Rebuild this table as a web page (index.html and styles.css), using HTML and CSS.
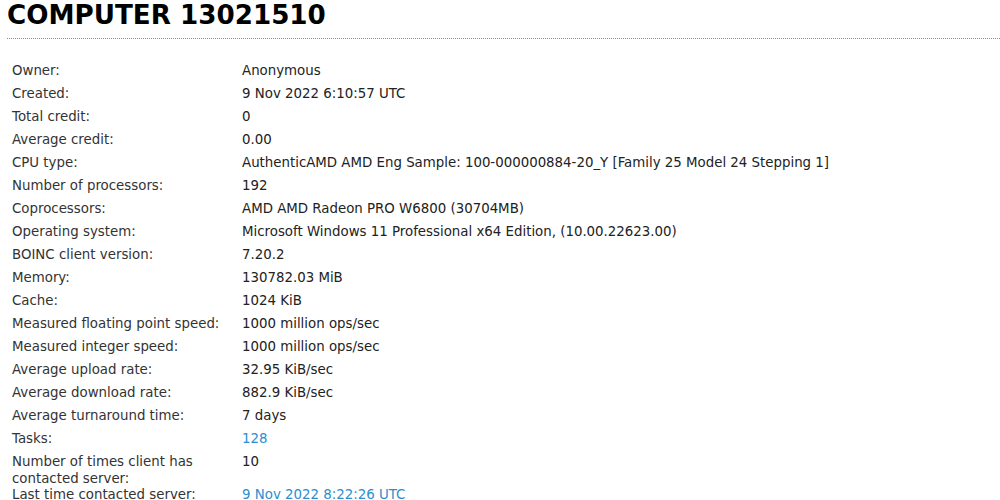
FILE: index.html
```html
<!DOCTYPE html>
<html>
<head>
<meta charset="utf-8">
<link rel="stylesheet" href="styles.css">
</head>
<body>
<h1 class="title">COMPUTER 13021510</h1>
<div class="info">
  <div class="label">Owner:</div><div class="value">Anonymous</div>
  <div class="label">Created:</div><div class="value">9 Nov 2022 6:10:57 UTC</div>
  <div class="label">Total credit:</div><div class="value">0</div>
  <div class="label">Average credit:</div><div class="value">0.00</div>
  <div class="label">CPU type:</div><div class="value">AuthenticAMD AMD Eng Sample: 100-000000884-20_Y [Family 25 Model 24 Stepping 1]</div>
  <div class="label">Number of processors:</div><div class="value">192</div>
  <div class="label">Coprocessors:</div><div class="value">AMD AMD Radeon PRO W6800 (30704MB)</div>
  <div class="label">Operating system:</div><div class="value">Microsoft Windows 11 Professional x64 Edition, (10.00.22623.00)</div>
  <div class="label">BOINC client version:</div><div class="value">7.20.2</div>
  <div class="label">Memory:</div><div class="value">130782.03 MiB</div>
  <div class="label">Cache:</div><div class="value">1024 KiB</div>
  <div class="label">Measured floating point speed:</div><div class="value">1000 million ops/sec</div>
  <div class="label">Measured integer speed:</div><div class="value">1000 million ops/sec</div>
  <div class="label">Average upload rate:</div><div class="value">32.95 KiB/sec</div>
  <div class="label">Average download rate:</div><div class="value">882.9 KiB/sec</div>
  <div class="label">Average turnaround time:</div><div class="value">7 days</div>
  <div class="label">Tasks:</div><div class="value"><a class="link" href="#">128</a></div>
  <div class="label wrap">Number of times client has contacted server:</div><div class="value wrap">10</div>
  <div class="label">Last time contacted server:</div><div class="value"><a class="link" href="#">9 Nov 2022 8:22:26 UTC</a></div>
</div>
</body>
</html>
```
FILE: styles.css
```css
html, body {
  margin: 0;
  padding: 0;
  background: #ffffff;
}
body {
  font-family: "DejaVu Sans", Verdana, sans-serif;
  font-size: 13.35px;
  color: #222222;
}
.title {
  margin: 0 0 0 7px;
  padding: 0 0 8px 0;
  font-size: 26.2px;
  line-height: 30px;
  font-weight: bold;
  color: #000000;
  border-bottom: 1px dotted #8a8a8a;
}
.info {
  display: grid;
  grid-template-columns: 230px 1fr;
  margin-top: 20px;
  padding-left: 12px;
}
.label, .value {
  padding: 3px 0;
  line-height: 17px;
}
.label {
  color: #333333;
  width: 212px;
}
.value {
  color: #222222;
}
.wrap {
  margin-bottom: -7px;
}
.link {
  color: #2a8fd0;
  text-decoration: none;
}
```
